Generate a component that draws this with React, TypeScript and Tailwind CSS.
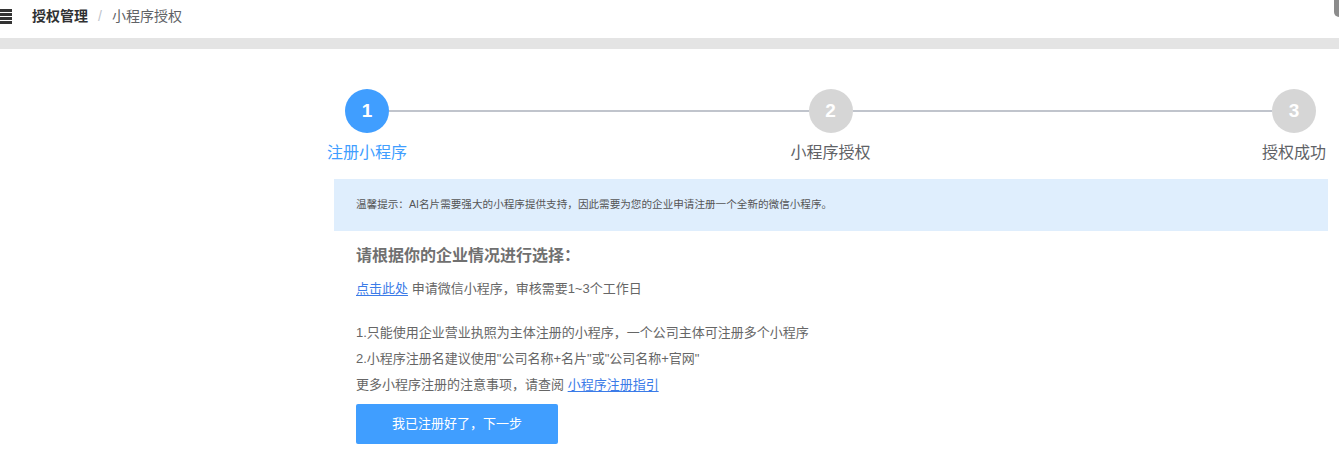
const font = { fontFamily: '"Liberation Sans", "Noto Sans CJK SC", sans-serif' };

function StepCircle({ n, active }: { n: number; active?: boolean }) {
  return (
    <div
      className={
        'w-11 h-11 rounded-full flex items-center justify-center text-white text-[19px] font-bold shrink-0 ' +
        (active ? 'bg-[#409eff]' : 'bg-[#d6d6d6]')
      }
    >
      {n}
    </div>
  );
}

export default function App() {
  return (
    <div className="w-[1339px] h-[452px] bg-white overflow-hidden text-[#666]" style={font}>
      {/* header */}
      <div className="h-[38px] flex items-center pb-[6px] relative">
        <div className="w-3 flex flex-col gap-[1px]">
          <div className="h-[3px] bg-[#333]" />
          <div className="h-[3px] bg-[#333]" />
          <div className="h-[3px] bg-[#333]" />
          <div className="h-[3px] bg-[#333]" />
        </div>
        <div className="ml-5 text-[14px] font-bold text-[#303133]">授权管理</div>
        <div className="mx-[10px] text-[14px] text-[#c0c4cc]">/</div>
        <div className="text-[14px] text-[#606266]">小程序授权</div>
        <div className="absolute right-0 top-0 w-[5px] h-[17px] bg-[#8c8c8c] rounded-bl-full" />
      </div>
      <div className="h-[11px] bg-[#e4e4e4]" />

      {/* steps */}
      <div className="mt-10 ml-[345px] mr-[23px] flex items-center">
        <StepCircle n={1} active />
        <div className="flex-1 h-[2px] bg-[#c0c4cc]" />
        <StepCircle n={2} />
        <div className="flex-1 h-[2px] bg-[#c0c4cc]" />
        <StepCircle n={3} />
      </div>
      <div className="mt-[10px] ml-[322px] flex justify-between text-[16px] leading-5">
        <div className="w-[90px] text-center text-[#409eff]">注册小程序</div>
        <div className="w-[90px] text-center text-[#606266]">小程序授权</div>
        <div className="w-[90px] text-center text-[#606266]">授权成功</div>
      </div>

      {/* content */}
      <div className="ml-[334px] mr-[11px] mt-4">
        <div className="h-[52px] bg-[#dfeefd] flex items-center pl-[22px] text-[10.6px] text-[#555]">
          温馨提示：AI名片需要强大的小程序提供支持，因此需要为您的企业申请注册一个全新的微信小程序。
        </div>
        <div className="px-[22px]">
          <div className="mt-[13px] text-[16px] leading-6 font-bold text-[#707070]">
            请根据你的企业情况进行选择：
          </div>
          <div className="mt-[11px] text-[13px] leading-5">
            <a className="text-[#3b7be8] underline underline-offset-2" href="#">
              点击此处
            </a>{' '}
            申请微信小程序，审核需要1~3个工作日
          </div>
          <div className="mt-[21px] text-[13px] leading-[26px]">
            <div>1.只能使用企业营业执照为主体注册的小程序，一个公司主体可注册多个小程序</div>
            <div>2.小程序注册名建议使用"公司名称+名片"或"公司名称+官网"</div>
            <div>
              更多小程序注册的注意事项，请查阅{' '}
              <a className="text-[#3b7be8] underline underline-offset-2" href="#">
                小程序注册指引
              </a>
            </div>
          </div>
          <button className="mt-[6px] w-[202px] h-10 rounded-[2px] bg-[#409eff] text-white text-[13px]">
            我已注册好了，下一步
          </button>
        </div>
      </div>
    </div>
  );
}
